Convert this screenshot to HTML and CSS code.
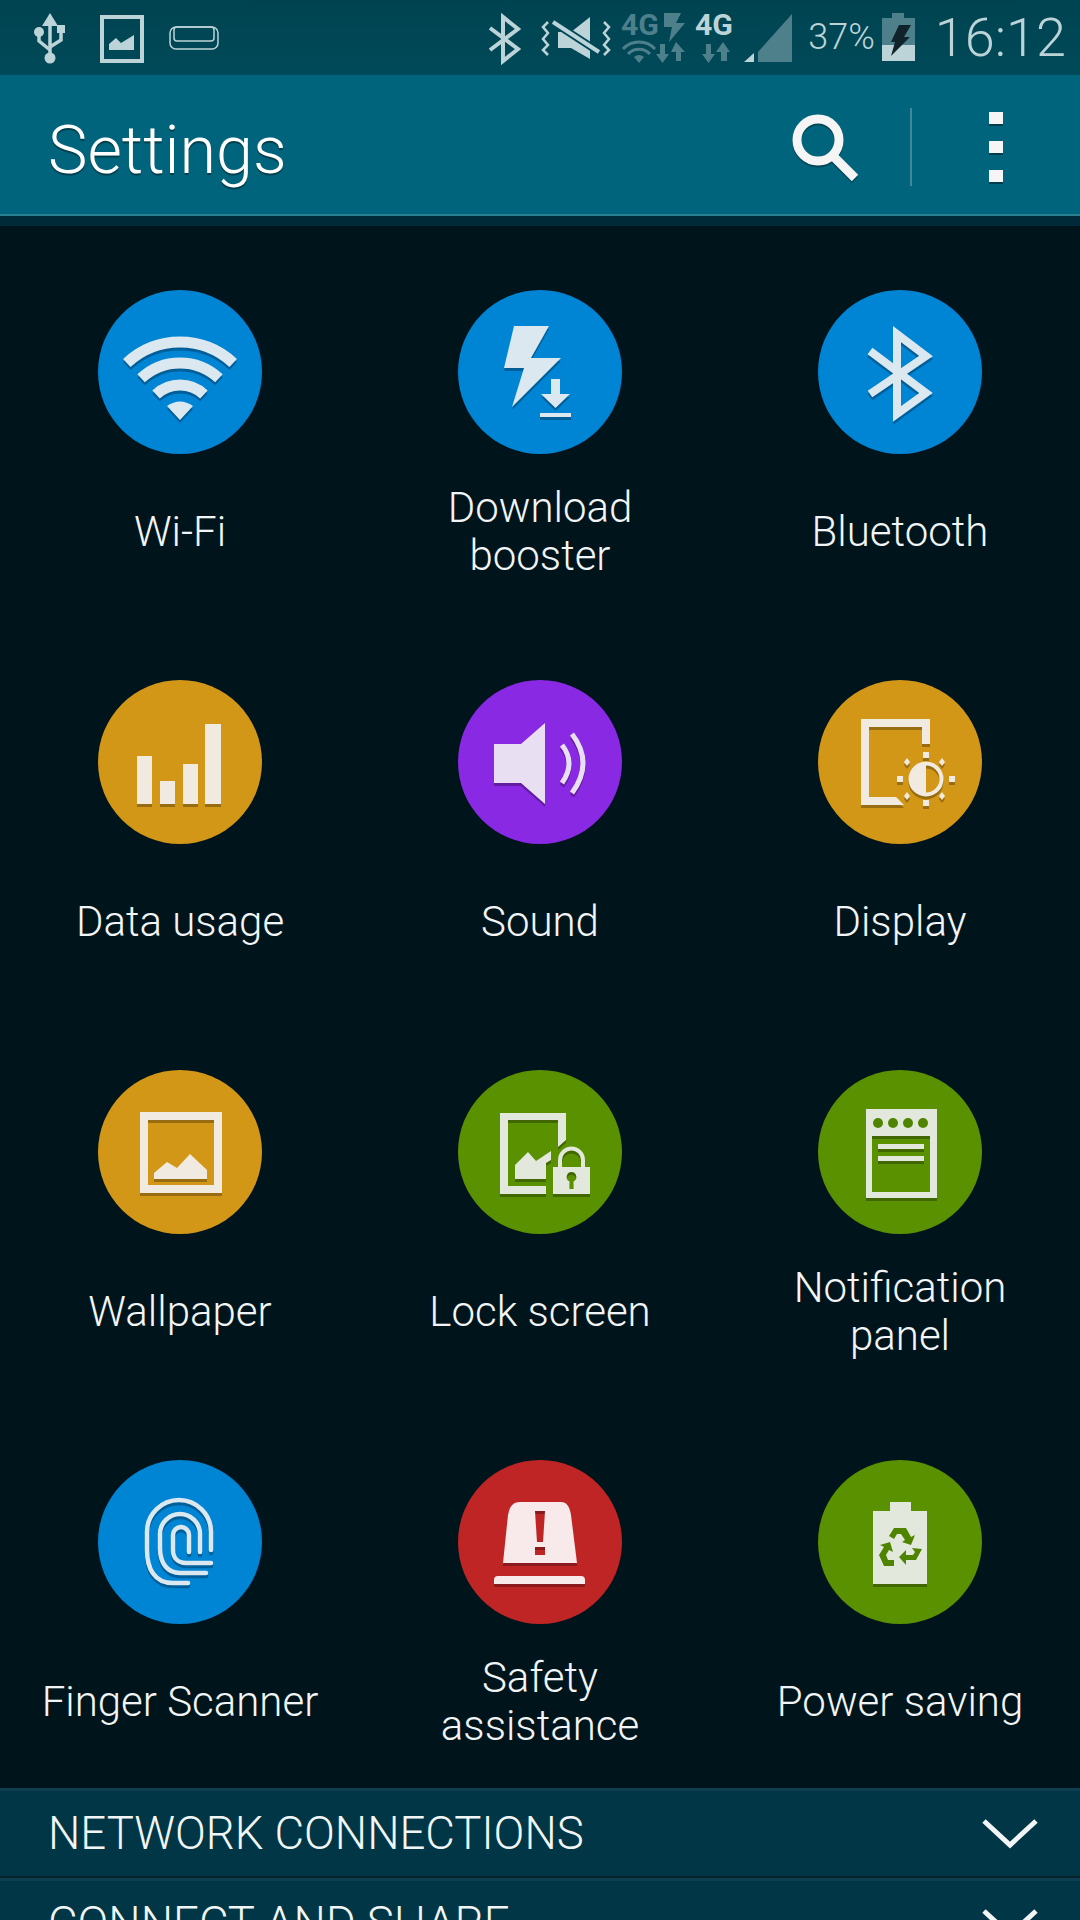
FILE: index.html
```html
<!DOCTYPE html>
<html>
<head>
  <title>Settings</title>
  <meta name="viewport" content="width=device-width, user-scalable=no">
  <link rel="stylesheet" href="styles.css">
</head>
<body>
  <div class="status">
    <svg class="status-icons" width="240" height="75" viewBox="0 0 240 75">
      <g class="line">
        <path d="M50 20V54M39 33V41L50 50M61 30V40L50 47" stroke-width="3.5"/>
      </g>
      <path class="light" d="M50 13L58 26H42Z"/>
      <circle class="light" cx="39" cy="32" r="5"/>
      <rect class="light" x="57" y="25" width="8" height="8"/>
      <circle class="light" cx="50" cy="58" r="5.5"/>
      <rect class="line" x="102" y="17" width="40" height="44" stroke-width="4"/>
      <path class="light" d="M109 50V44L116 38L121 43L134 35V50Z"/>
      <rect class="line" x="170" y="27" width="48" height="22" rx="6" stroke-width="1.5"/>
      <rect class="line" x="174" y="27" width="40" height="14" rx="3" stroke-width="1.5"/>
    </svg>
    <div class="status-fill"></div>
    <svg class="status-icons" width="320" height="75" viewBox="480 0 320 75">
      <path class="line" d="M489 28L517 49L502 61V17L517 29L489 50" stroke-width="4"/>
      <path class="line" d="M547 22L542 27L547 33L542 39L547 45L542 50L547 55" stroke-width="2.5"/>
      <path class="line" d="M603 22L608 27L603 33L608 39L603 45L608 50L603 55" stroke-width="2.5"/>
      <path class="light" d="M557 32H570L589 17V59L570 48H557Z"/>
      <path class="cut" d="M552 22L598 52" stroke-width="8"/>
      <path class="line" d="M552 22L598 52" stroke-width="4"/>
      <text class="net dim-text" x="620" y="35" textLength="38" lengthAdjust="spacingAndGlyphs">4G</text>
      <path class="dim" d="M663 13H680L675 23H684L668 42L671 27H663Z"/>
      <g class="dim-line">
        <path d="M622 49A22 22 0 0 1 654 49M627 54A15 15 0 0 1 649 54" stroke-width="3"/>
      </g>
      <path class="dim" d="M638 63L633 57A8 8 0 0 1 643 57Z"/>
      <path class="dim" d="M659 44H664V54H668L661.500 63L655 54H659ZM675 42L684 52H680V61H675V52H670Z"/>
      <text class="net" x="694" y="35" textLength="38" lengthAdjust="spacingAndGlyphs">4G</text>
      <path class="dim" d="M705 44H710V54H714L707.500 63L701 54H705ZM722 42L729 52H726V61H720V52H715Z"/>
      <path class="dim" d="M791 14V62H757V52Z"/>
      <path class="light" d="M743 62L753 53V62Z"/>
    </svg>
    <span class="battery-text">37%</span>
    <svg class="battery" width="33" height="75" viewBox="884 0 33 75">
      <path class="dim" d="M894 13H906V18H917V45H884V18H894Z"/>
      <rect class="light" x="884" y="45" width="33" height="16"/>
      <path class="bolt" d="M901 25H913L906 37H912L893 56L897 42H893Z"/>
    </svg>
    <span class="clock">16:12</span>
  </div>

  <div class="actionbar">
    <span class="title">Settings</span>
    <svg class="search" width="70" height="70" viewBox="0 0 70 70">
      <circle cx="28" cy="28" r="21" fill="none" stroke="#f5f5f5" stroke-width="9"/>
      <path d="M42 43L65 66" stroke="#f5f5f5" stroke-width="9"/>
    </svg>
    <div class="divider"></div>
    <div class="overflow">
      <div class="dot"></div>
      <div class="dot"></div>
      <div class="dot"></div>
    </div>
  </div>
  <div class="actionbar-shade"></div>

  <div class="grid">
    <div class="item">
      <div class="circle blue">
        <svg class="glyph" width="164" height="164" viewBox="0 0 164 164">
          <g class="stroke" stroke-width="11">
            <path d="M28.800 73A78 78 0 0 1 135.200 73"/>
            <path d="M43.100 88.300A57 57 0 0 1 120.900 88.300"/>
            <path d="M58.100 104.400A35 35 0 0 1 105.900 104.400"/>
          </g>
          <path class="solid" d="M82 130L69 116Q82 107 95 116Z"/>
        </svg>
      </div>
      <div class="label">Wi-Fi</div>
    </div>
    <div class="item">
      <div class="circle blue">
        <svg class="glyph" width="164" height="164" viewBox="0 0 164 164">
          <path class="solid" d="M56 36H91L73 68H103L54 117L66 78H46Z"/>
          <path class="solid" d="M93 89H102V104H112L97.500 118L83 104H93ZM82 123H113V127H82Z"/>
        </svg>
      </div>
      <div class="label">Download booster</div>
    </div>
    <div class="item">
      <div class="circle blue">
        <svg class="glyph" width="164" height="164" viewBox="0 0 164 164">
          <path class="stroke" stroke-width="8" d="M52 61L108 103L79 124V44L108 66L52 104"/>
        </svg>
      </div>
      <div class="label">Bluetooth</div>
    </div>

    <div class="item">
      <div class="circle amber">
        <svg class="glyph" width="164" height="164" viewBox="0 0 164 164">
          <path class="solid" d="M39 76H54V124H39ZM62 101H77V124H62ZM85 84H100V124H85ZM107 44H123V124H107Z"/>
        </svg>
      </div>
      <div class="label">Data usage</div>
    </div>
    <div class="item">
      <div class="circle purple">
        <svg class="glyph" width="164" height="164" viewBox="0 0 164 164">
          <path class="solid" d="M36 64H63L87 43V124L63 103H36Z"/>
          <path class="stroke" stroke-width="5" d="M104 65Q118 83 104 103M114 54Q136 83 114 113"/>
        </svg>
      </div>
      <div class="label">Sound</div>
    </div>
    <div class="item">
      <div class="circle amber">
        <svg class="glyph" width="164" height="164" viewBox="0 0 164 164">
          <path class="solid" d="M43 39H112V64H104V47H51V117H78L86 125H43Z"/>
          <circle class="stroke" cx="108" cy="99" r="15.500" stroke-width="4"/>
          <path class="solid" d="M108 83.500A15.500 15.500 0 0 0 108 114.500Z"/>
          <path class="solid" d="M105 72H111V78H105ZM105 120H111V126H105ZM79 96H85V102H79ZM131 96H137V102H131Z"/>
          <path class="solid" d="M89 78L92 82L89 86L86 82ZM124 78L127 82L124 86L121 82ZM89 112L92 116L89 120L86 116ZM124 112L127 116L124 120L121 116Z"/>
        </svg>
      </div>
      <div class="label">Display</div>
    </div>

    <div class="item">
      <div class="circle amber">
        <svg class="glyph" width="164" height="164" viewBox="0 0 164 164">
          <path class="solid" fill-rule="evenodd" d="M42 42H124V123H42ZM50 50V115H116V50Z"/>
          <path class="solid" d="M56 109V103L69 92L79 98L92 84L109 100V109Z"/>
        </svg>
      </div>
      <div class="label">Wallpaper</div>
    </div>
    <div class="item">
      <div class="circle green">
        <svg class="glyph" width="164" height="164" viewBox="0 0 164 164">
          <path class="solid" d="M42 43H108V70L100 77V50H50V116H88V124H42Z"/>
          <path class="solid" d="M57 95L70 82L78 91L93 81V90L88 93V109H57Z"/>
          <path class="solid" fill-rule="evenodd" d="M95 97H132V124H95ZM113.500 102A5 5 0 0 0 111.500 111.500V119H115.500V111.500A5 5 0 0 0 113.500 102Z"/>
          <path class="stroke" stroke-width="4" d="M102 97V90A11.500 11.500 0 0 1 125 90V97"/>
        </svg>
      </div>
      <div class="label">Lock screen</div>
    </div>
    <div class="item">
      <div class="circle green">
        <svg class="glyph" width="164" height="164" viewBox="0 0 164 164">
          <path class="solid" fill-rule="evenodd" d="M48 39H119V128H48ZM54 66V122H112V66ZM60 74H106V79H60ZM60 86H106V91H60Z"/>
          <circle class="hole" cx="60" cy="53" r="5"/>
          <circle class="hole" cx="75" cy="53" r="5"/>
          <circle class="hole" cx="90" cy="53" r="5"/>
          <circle class="hole" cx="105" cy="53" r="5"/>
        </svg>
      </div>
      <div class="label">Notification panel</div>
    </div>

    <div class="item">
      <div class="circle blue">
        <svg class="glyph" width="164" height="164" viewBox="0 0 164 164">
          <g class="stroke" stroke-width="4.500" stroke-linecap="round">
            <path d="M113 90V72A32 32 0 0 0 49 72V90C49 108 56 123 75 123H90"/>
            <path d="M102 92V74A20 20 0 0 0 62 74V88C62 104 70 113 82 113H108"/>
            <path d="M91 92V75A8 8 0 0 0 75 75V90C75 98 80 103 88 103H113"/>
          </g>
        </svg>
      </div>
      <div class="label">Finger Scanner</div>
    </div>
    <div class="item">
      <div class="circle red">
        <svg class="glyph" width="164" height="164" viewBox="0 0 164 164">
          <path class="solid" fill-rule="evenodd" d="M62 42H103Q111 42 113 55L119 103H45L50 55Q52 42 62 42ZM77 51L79 82H85L87 51ZM77 87V95H87V87Z"/>
          <path class="solid" d="M36 124V120Q36 116 40 116H123Q127 116 127 120V124Z"/>
        </svg>
      </div>
      <div class="label">Safety assistance</div>
    </div>
    <div class="item">
      <div class="circle green">
        <svg class="glyph" width="164" height="164" viewBox="0 0 164 164">
          <path class="solid" d="M72 42H93V51H109V124H55V51H72Z"/>
          <g class="recycle">
            <path d="M76 68H88L93 77L97 75L93 85L84 82L87 80L83 74H79L76 79L71 76Z"/>
            <path d="M104 89L98 100H88V105L81 97L88 90V95H95L97 92L94 88Z"/>
            <path d="M66 106L61 95L66 87L62 85L72 82L75 92L71 90L68 95L70 100H76V106Z"/>
          </g>
        </svg>
      </div>
      <div class="label">Power saving</div>
    </div>
  </div>

  <div class="section">
    <span>NETWORK CONNECTIONS</span>
    <svg width="56" height="30" viewBox="0 0 56 30">
      <path d="M2 2L28 26L54 2" fill="none" stroke="#f2f5f5" stroke-width="5"/>
    </svg>
  </div>
  <div class="section">
    <span>CONNECT AND SHARE</span>
    <svg width="56" height="30" viewBox="0 0 56 30">
      <path d="M2 2L28 26L54 2" fill="none" stroke="#f2f5f5" stroke-width="5"/>
    </svg>
  </div>
</body>
</html>
```

FILE: styles.css
```css
html, body {
  margin: 0;
  padding: 0;
}
body {
  width: 1080px;
  height: 1920px;
  overflow: hidden;
  background-color: #00141c;
  font-family: Roboto, "Liberation Sans", sans-serif;
  font-weight: 300;
}

/* status bar */
.status {
  display: flex;
  align-items: center;
  height: 75px;
  padding-right: 14px;
  background-image: linear-gradient(#004350, #004a59);
  color: #bcd3d8;
}
.status-icons,
.battery {
  display: block;
  flex-shrink: 0;
}
.status-fill {
  flex: 1;
}
.status .line {
  fill: none;
  stroke: #bcd3d8;
}
.status .light {
  fill: #bcd3d8;
}
.status .dim {
  fill: #4e808c;
}
.status .dim-line {
  fill: none;
  stroke: #4e808c;
}
.status .cut {
  fill: none;
  stroke: #004759;
}
.status .bolt {
  fill: #10222a;
}
.net {
  font-family: Roboto, sans-serif;
  font-weight: 700;
  font-size: 30px;
  fill: #bcd3d8;
}
.net.dim-text {
  fill: #4e808c;
}
.battery-text {
  margin-left: 7px;
  margin-right: 7px;
  font-size: 36px;
  line-height: 75px;
}
.clock {
  margin-left: 20px;
  font-size: 54px;
  line-height: 75px;
}

/* action bar */
.actionbar {
  display: flex;
  align-items: center;
  box-sizing: border-box;
  height: 141px;
  padding: 4px 77px 0 48px;
  background-color: #00657c;
  border-bottom: 2px solid #2a8090;
}
.title {
  flex: 1;
  margin-top: 7px;
  font-size: 66.500px;
  color: #fff;
  text-shadow: 0 2px 1px rgba(0,0,0,.4);
}
.search {
  filter: drop-shadow(0 2px 0 rgba(0,0,0,.3));
}
.divider {
  width: 2px;
  height: 78px;
  margin-left: 50px;
  margin-right: 77px;
  background-color: #42889a;
}
.overflow {
  display: flex;
  flex-direction: column;
  gap: 17px;
}
.dot {
  width: 14px;
  height: 12px;
  background-color: #f5f5f5;
  box-shadow: 0 2px 0 rgba(0,0,0,.4);
}
.actionbar-shade {
  height: 10px;
  background-color: #002a38;
}

/* icon grid */
.grid {
  display: grid;
  grid-template-columns: repeat(3, 360px);
  row-gap: 100px;
  padding-top: 64px;
  padding-bottom: 38px;
}
.item {
  display: flex;
  flex-direction: column;
  align-items: center;
}
.circle {
  width: 164px;
  height: 164px;
  border-radius: 50%;
}
.blue {
  background-color: #0084d4;
  color: #dce8f0;
}
.amber {
  background-color: #d39718;
  color: #f1eae0;
}
.purple {
  background-color: #8a29e3;
  color: #e8e0f2;
}
.green {
  background-color: #5a9100;
  color: #e2e8dc;
}
.red {
  background-color: #c02526;
  color: #f8eaea;
}
.glyph {
  display: block;
  filter: drop-shadow(0 3px 0 rgba(0,0,0,.28));
}
.solid {
  fill: currentColor;
}
.stroke {
  fill: none;
  stroke: currentColor;
  stroke-miterlimit: 8;
}
.hole {
  fill: #4f8400;
}
.recycle {
  fill: #4f8400;
}
.label {
  display: flex;
  align-items: center;
  justify-content: center;
  height: 96px;
  width: 320px;
  margin-top: 30px;
  font-size: 42px;
  line-height: 48px;
  text-align: center;
  color: #f2f5f6;
}

/* collapsed sections */
.section {
  display: flex;
  align-items: center;
  justify-content: space-between;
  box-sizing: border-box;
  height: 90px;
  padding: 0 42px 0 48px;
  background-color: #003645;
  border-top: 3px solid #0f3e50;
  border-bottom: 2px solid #06222c;
  font-size: 45.500px;
  color: #f2f5f5;
}
```
